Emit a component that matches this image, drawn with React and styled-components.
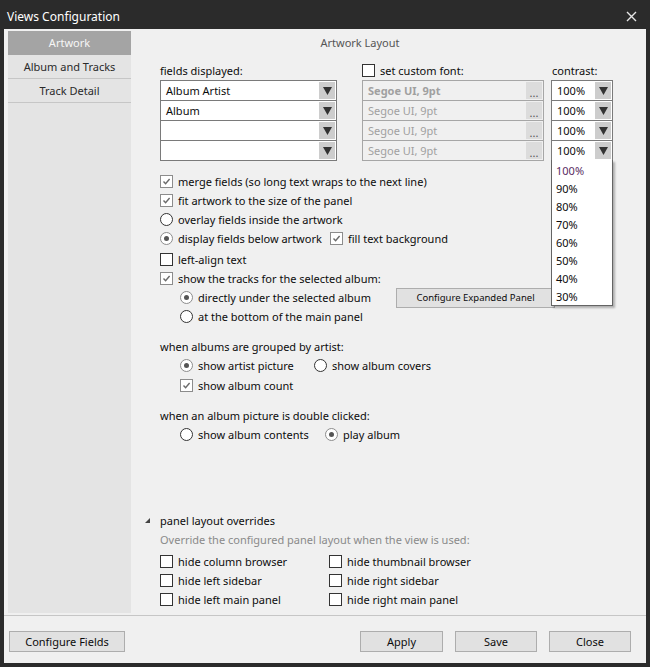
import React from "react";
import styled, { createGlobalStyle } from "styled-components";

const GlobalStyle = createGlobalStyle`
  html, body {
    margin: 0;
    padding: 0;
    background: #2b2b2b;
  }
  body {
    font-family: "Noto Sans", "Open Sans", sans-serif;
    font-size: 11px;
    color: #0c0c0c;
  }
  * {
    box-sizing: border-box;
  }
`;

const Window = styled.div`
  width: 650px;
  height: 667px;
  background: #2b2b2b;
  display: flex;
  flex-direction: column;
  padding: 0 4px 4px;
`;

const TitleBar = styled.div`
  height: 29px;
  flex: none;
  display: flex;
  align-items: center;
  justify-content: space-between;
  padding: 3px 9px 0 3px;
  color: #fff;
  font-size: 12px;
`;

const Client = styled.div`
  flex: 1;
  background: #f0f0f0;
  display: flex;
  flex-direction: column;
`;

const Body = styled.div`
  height: 586px;
  flex: none;
  display: flex;
  padding: 2px 0 2px 4px;
`;

const Sidebar = styled.div`
  width: 123px;
  flex: none;
  background: #e4e4e4;
  display: flex;
  flex-direction: column;
`;

const SideItem = styled.div`
  height: 24px;
  display: flex;
  align-items: center;
  justify-content: center;
  border-bottom: 1px solid ${(p) => (p.$active ? "transparent" : "#c6c6c6")};
  background: ${(p) => (p.$active ? "#a4a4a4" : "transparent")};
  color: ${(p) => (p.$active ? "#f6f6f6" : "#2a2a2a")};
`;

const Main = styled.div`
  flex: 1;
  display: flex;
  flex-direction: column;
  padding: 0 0 4px 29px;
`;

const Heading = styled.div`
  width: 400px;
  margin-top: 4px;
  line-height: 16px;
  text-align: center;
  color: #555;
`;

const FieldGrid = styled.div`
  display: flex;
  margin-top: 10px;
`;

const FieldColumn = styled.div`
  width: ${(p) => p.$width}px;
  margin-left: ${(p) => p.$offset || 0}px;
  display: flex;
  flex-direction: column;
`;

const ColumnLabel = styled.div`
  height: 19px;
  display: flex;
  align-items: center;
  gap: 5px;
  padding-left: ${(p) => p.$pad || 0}px;
`;

const Combo = styled.div`
  position: relative;
  height: 21px;
  display: flex;
  align-items: center;
  border: 1px solid ${(p) => (p.$disabled ? "#a6a6a6" : "#7a7a7a")};
  background: ${(p) => (p.$disabled ? "#f0f0f0" : "#fff")};
  color: ${(p) => (p.$disabled ? "#a0a0a0" : "#0c0c0c")};
  font-weight: ${(p) => (p.$bold ? 700 : 400)};
  padding-left: 5px;

  & + & {
    margin-top: -1px;
  }
`;

const ComboText = styled.span`
  flex: 1;
  white-space: nowrap;
`;

const ArrowButton = styled.span`
  width: 16px;
  height: 17px;
  margin-right: 1px;
  background: #cdcdcd;
  display: flex;
  align-items: center;
  justify-content: center;
`;

const DotsButton = styled.span`
  width: 16px;
  height: 17px;
  margin-right: 1px;
  background: #dcdcdc;
  color: #555;
  font-weight: 400;
  display: flex;
  align-items: flex-end;
  justify-content: center;
  line-height: 13px;
`;

const DropList = styled.div`
  position: absolute;
  top: 100%;
  left: -1px;
  width: 62px;
  height: 146px;
  padding-top: 2px;
  background: #fff;
  border: 1px solid #646464;
  border-top: none;
  box-shadow: 2px 2px 2px rgba(0, 0, 0, 0.28);
  z-index: 5;
  font-weight: 400;
`;

const DropItem = styled.div`
  height: 18px;
  line-height: 18px;
  padding-left: 4px;
  color: ${(p) => (p.$current ? "#5a2d63" : "#0c0c0c")};
`;

const Row = styled.div`
  height: 19px;
  display: flex;
  align-items: center;
  margin-top: ${(p) => p.$mt || 0}px;
  margin-left: ${(p) => p.$indent || 0}px;
`;

const Cell = styled.div`
  width: ${(p) => p.$width}px;
  flex: none;
  display: flex;
  align-items: center;
`;

const OptionWrap = styled.label`
  display: flex;
  align-items: center;
  gap: 5px;
  white-space: nowrap;
`;

const Box = styled.span`
  width: 13px;
  height: 13px;
  flex: none;
  background: #fff;
  border: 1px solid ${(p) => (p.$on ? "#8c8c8c" : "#333")};
  border-radius: ${(p) => (p.$round ? "50%" : "0")};
  display: flex;
  align-items: center;
  justify-content: center;
`;

const Dot = styled.span`
  width: 5px;
  height: 5px;
  border-radius: 50%;
  background: #555;
`;

const SmallButton = styled.div`
  width: 159px;
  height: 20px;
  border: 1px solid #adadad;
  background: #e1e1e1;
  font-size: 9.5px;
  display: flex;
  align-items: center;
  justify-content: center;
`;

const Text = styled.div`
  color: ${(p) => p.$color || "#0c0c0c"};
`;

const Overrides = styled.div`
  margin-top: auto;
  display: flex;
  flex-direction: column;
`;

const Triangle = styled.svg`
  width: 5px;
  height: 5px;
  margin-left: -15px;
  margin-right: 10px;
`;

const OverrideGrid = styled.div`
  display: grid;
  grid-template-columns: 169px auto;
  grid-auto-rows: 19px;
  margin-top: 3px;
`;

const Footer = styled.div`
  flex: 1;
  display: flex;
  align-items: flex-start;
  border-top: 1px solid #c6c6c6;
  padding: 15px 15px 0 5px;
  gap: 12px;
`;

const Button = styled.div`
  width: ${(p) => p.$width}px;
  height: 21px;
  border: 1px solid #adadad;
  background: #e1e1e1;
  display: flex;
  align-items: center;
  justify-content: center;
  margin-left: ${(p) => (p.$push ? "auto" : "0")};
`;

const Arrow = () => (
  <svg width="9" height="8" viewBox="0 0 9 8">
    <polygon points="0,0 9,0 4.5,8" fill="#333" />
  </svg>
);

const Tick = () => (
  <svg width="9" height="9" viewBox="0 0 9 9">
    <path d="M1.5 4.6 L3.6 6.8 L7.6 2" fill="none" stroke="#6a6a6a" strokeWidth="1.4" />
  </svg>
);

const Option = ({ radio, on, children }) => (
  <OptionWrap>
    <Box $on={on} $round={radio}>
      {on && (radio ? <Dot /> : <Tick />)}
    </Box>
    {children}
  </OptionWrap>
);

const fields = ["Album Artist", "Album", "", ""];
const levels = ["100%", "90%", "80%", "70%", "60%", "50%", "40%", "30%"];

export default function App() {
  return (
    <>
      <GlobalStyle />
      <Window>
        <TitleBar>
          <span>Views Configuration</span>
          <svg width="11" height="11" viewBox="0 0 11 11">
            <path d="M1 1 L10 10 M10 1 L1 10" stroke="#e6e6e6" strokeWidth="1.4" />
          </svg>
        </TitleBar>
        <Client>
          <Body>
            <Sidebar>
              <SideItem $active>Artwork</SideItem>
              <SideItem>Album and Tracks</SideItem>
              <SideItem>Track Detail</SideItem>
            </Sidebar>
            <Main>
              <Heading>Artwork Layout</Heading>
              <FieldGrid>
                <FieldColumn $width={177}>
                  <ColumnLabel>fields displayed:</ColumnLabel>
                  {fields.map((f, i) => (
                    <Combo key={i}>
                      <ComboText>{f}</ComboText>
                      <ArrowButton>
                        <Arrow />
                      </ArrowButton>
                    </Combo>
                  ))}
                </FieldColumn>
                <FieldColumn $width={182} $offset={25}>
                  <ColumnLabel>
                    <Box />
                    set custom font:
                  </ColumnLabel>
                  {fields.map((f, i) => (
                    <Combo key={i} $disabled $bold={i === 0}>
                      <ComboText>Segoe UI, 9pt</ComboText>
                      <DotsButton>...</DotsButton>
                    </Combo>
                  ))}
                </FieldColumn>
                <FieldColumn $width={62} $offset={7}>
                  <ColumnLabel $pad={1}>contrast:</ColumnLabel>
                  {fields.map((f, i) => (
                    <Combo key={i}>
                      <ComboText>100%</ComboText>
                      <ArrowButton>
                        <Arrow />
                      </ArrowButton>
                      {i === 3 && (
                        <DropList>
                          {levels.map((l, j) => (
                            <DropItem key={l} $current={j === 0}>
                              {l}
                            </DropItem>
                          ))}
                        </DropList>
                      )}
                    </Combo>
                  ))}
                </FieldColumn>
              </FieldGrid>

              <Row $mt={11}>
                <Option on>merge fields (so long text wraps to the next line)</Option>
              </Row>
              <Row>
                <Option on>fit artwork to the size of the panel</Option>
              </Row>
              <Row>
                <Option radio>overlay fields inside the artwork</Option>
              </Row>
              <Row>
                <Cell $width={170}>
                  <Option radio on>display fields below artwork</Option>
                </Cell>
                <Option on>fill text background</Option>
              </Row>
              <Row $mt={2}>
                <Option>left-align text</Option>
              </Row>
              <Row>
                <Option on>show the tracks for the selected album:</Option>
              </Row>
              <Row $indent={20}>
                <Cell $width={216}>
                  <Option radio on>directly under the selected album</Option>
                </Cell>
                <SmallButton>Configure Expanded Panel</SmallButton>
              </Row>
              <Row $indent={20}>
                <Option radio>at the bottom of the main panel</Option>
              </Row>

              <Row $mt={11}>
                <Text>when albums are grouped by artist:</Text>
              </Row>
              <Row $indent={20}>
                <Cell $width={134}>
                  <Option radio on>show artist picture</Option>
                </Cell>
                <Option radio>show album covers</Option>
              </Row>
              <Row $indent={20} $mt={1}>
                <Option on>show album count</Option>
              </Row>

              <Row $mt={11}>
                <Text>when an album picture is double clicked:</Text>
              </Row>
              <Row $indent={20}>
                <Cell $width={145}>
                  <Option radio>show album contents</Option>
                </Cell>
                <Option radio on>play album</Option>
              </Row>

              <Overrides>
                <Row>
                  <Triangle viewBox="0 0 5 5">
                    <polygon points="5,0 5,5 0,5" fill="#444" />
                  </Triangle>
                  <Text>panel layout overrides</Text>
                </Row>
                <Row>
                  <Text $color="#8a8a8a">
                    Override the configured panel layout when the view is used:
                  </Text>
                </Row>
                <OverrideGrid>
                  <Option>hide column browser</Option>
                  <Option>hide thumbnail browser</Option>
                  <Option>hide left sidebar</Option>
                  <Option>hide right sidebar</Option>
                  <Option>hide left main panel</Option>
                  <Option>hide right main panel</Option>
                </OverrideGrid>
              </Overrides>
            </Main>
          </Body>
          <Footer>
            <Button $width={116}>Configure Fields</Button>
            <Button $width={83} $push>
              Apply
            </Button>
            <Button $width={82}>Save</Button>
            <Button $width={82}>Close</Button>
          </Footer>
        </Client>
      </Window>
    </>
  );
}
